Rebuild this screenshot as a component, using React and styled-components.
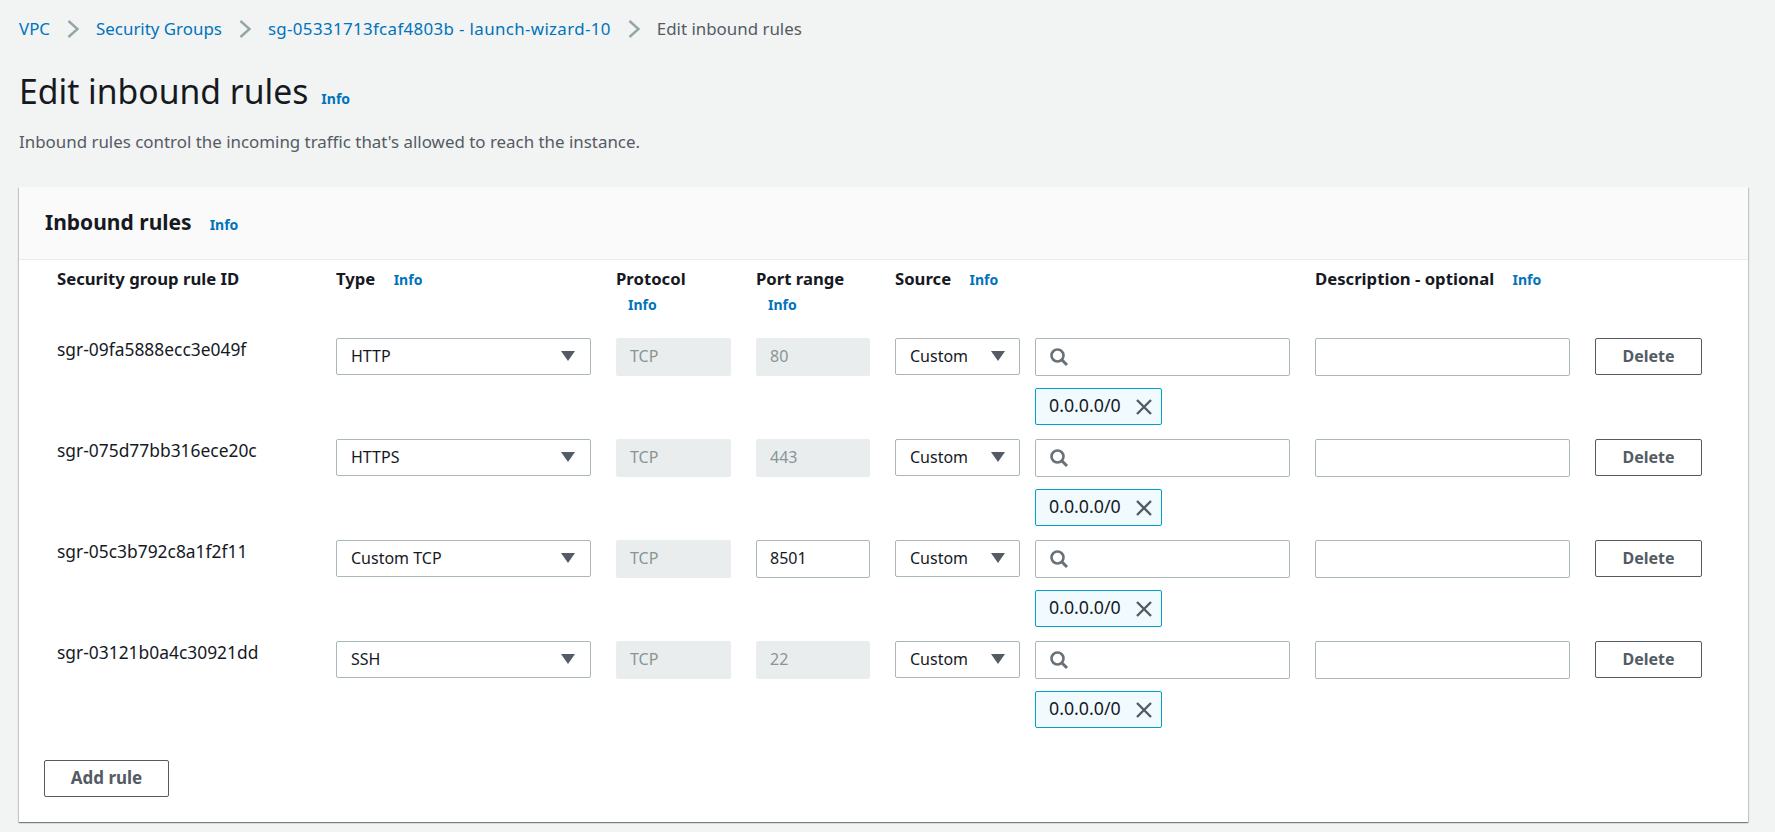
import styled, { createGlobalStyle } from "styled-components";

const RULES = [
  { id: "sgr-09fa5888ecc3e049f", type: "HTTP", port: "80" },
  { id: "sgr-075d77bb316ece20c", type: "HTTPS", port: "443" },
  { id: "sgr-05c3b792c8a1f2f11", type: "Custom TCP", port: "8501", editable: true },
  { id: "sgr-03121b0a4c30921dd", type: "SSH", port: "22" },
];

const CRUMBS = ["VPC", "Security Groups", "sg-05331713fcaf4803b - launch-wizard-10"];

function Caret() {
  return (
    <svg width="14" height="10" viewBox="0 0 14 10">
      <path d="M0 0h14L7 10z" fill="#545b64" />
    </svg>
  );
}

function App() {
  return (
    <Page>
      <GlobalStyle />
      <Breadcrumbs>
        {CRUMBS.map((c) => (
          <Crumb key={c}>
            <CrumbLink>{c}</CrumbLink>
            <svg width="12" height="18" viewBox="0 0 12 18">
              <path d="M1.5 1l9 8-9 8" fill="none" stroke="#95a5a6" strokeWidth="2.4" />
            </svg>
          </Crumb>
        ))}
        <CrumbCurrent>Edit inbound rules</CrumbCurrent>
      </Breadcrumbs>

      <TitleRow>
        <Title>Edit inbound rules</Title>
        <Info>Info</Info>
      </TitleRow>
      <Description>
        Inbound rules control the incoming traffic that's allowed to reach the instance.
      </Description>

      <Card>
        <CardHeader>
          <CardTitle>Inbound rules</CardTitle>
          <Info>Info</Info>
        </CardHeader>
        <CardBody>
          <HeadRow>
            <Label>Security group rule ID</Label>
            <Label>
              Type <Info>Info</Info>
            </Label>
            <div>
              <Label>Protocol</Label>
              <IndentedInfo>Info</IndentedInfo>
            </div>
            <div>
              <Label>Port range</Label>
              <IndentedInfo>Info</IndentedInfo>
            </div>
            <Label>
              Source <Info>Info</Info>
            </Label>
            <Label>
              Description - optional <Info>Info</Info>
            </Label>
          </HeadRow>

          {RULES.map((r) => (
            <RuleRow key={r.id}>
              <RuleId>{r.id}</RuleId>
              <Select>
                {r.type}
                <Caret />
              </Select>
              <Field>TCP</Field>
              <Field $editable={r.editable}>{r.port}</Field>
              <SourceCell>
                <SourceSelect>
                  Custom
                  <Caret />
                </SourceSelect>
                <SearchStack>
                  <TextBox>
                    <svg width="20" height="20" viewBox="0 0 20 20">
                      <circle cx="8.5" cy="8.5" r="6" fill="none" stroke="#687078" strokeWidth="2.6" />
                      <path d="M13 13l5 5" stroke="#687078" strokeWidth="3" />
                    </svg>
                  </TextBox>
                  <Chip>
                    <ChipText>0.0.0.0/0</ChipText>
                    <svg width="18" height="18" viewBox="0 0 18 18">
                      <path d="M2 2l14 14M16 2L2 16" stroke="#545b64" strokeWidth="2.4" />
                    </svg>
                  </Chip>
                </SearchStack>
              </SourceCell>
              <TextBox />
              <Button>Delete</Button>
            </RuleRow>
          ))}
        </CardBody>
        <Footer>
          <AddButton>Add rule</AddButton>
        </Footer>
      </Card>
    </Page>
  );
}

export default App;

const GlobalStyle = createGlobalStyle`
  html, body {
    margin: 0;
    background: #f2f3f3;
    color: #16191f;
    font-family: "Noto Sans", "Open Sans", sans-serif;
    font-size: 16px;
  }
`;

const Page = styled.div`
  height: 832px;
  box-sizing: border-box;
  padding: 18px 27px 10px 19px;
  overflow: hidden;
`;

const Breadcrumbs = styled.nav`
  display: flex;
  align-items: center;
  height: 21px;
  font-size: 16.9px;
`;

const Crumb = styled.div`
  display: flex;
  align-items: center;
  gap: 17px;
  margin-right: 17px;

  &:nth-child(3) {
    letter-spacing: 0.35px;
  }
`;

const CrumbLink = styled.a`
  color: #0073bb;
`;

const CrumbCurrent = styled.span`
  color: #545b64;
`;

const TitleRow = styled.div`
  display: flex;
  align-items: baseline;
  gap: 13px;
  margin-top: 29px;
  height: 46px;
`;

const Title = styled.h1`
  margin: 0;
  font-size: 33.7px;
  font-weight: 400;
  line-height: 46px;
`;

const Info = styled.a`
  color: #0073bb;
  font-size: 14px;
  font-weight: 700;
`;

const IndentedInfo = styled(Info)`
  display: block;
  margin: 5px 0 0 12px;
  line-height: 20px;
`;

const Description = styled.p`
  margin: 17px 0 0;
  color: #545b64;
  font-size: 16.9px;
  line-height: 22px;
`;

const Card = styled.section`
  margin-top: 34px;
  height: 635px;
  box-sizing: border-box;
  background: #fff;
  box-shadow: 0 1px 1px 0 rgba(0, 28, 36, 0.35), 1px 1px 1px 0 rgba(0, 28, 36, 0.15),
    -1px 1px 1px 0 rgba(0, 28, 36, 0.15);
`;

const CardHeader = styled.header`
  display: flex;
  align-items: baseline;
  gap: 18px;
  height: 73px;
  box-sizing: border-box;
  padding: 21px 26px 0;
  background: #fafafa;
  border-bottom: 1px solid #eaeded;
`;

const CardTitle = styled.h2`
  margin: 0;
  font-size: 21px;
  font-weight: 700;
  line-height: 28px;
`;

const CardBody = styled.div`
  padding: 0 0 0 38px;
`;

const RowGrid = styled.div`
  display: grid;
  grid-template-columns: 254px 255px 115px 114px 395px 255px 107px;
  column-gap: 25px;
`;

const HeadRow = styled(RowGrid)`
  height: 78px;
  padding-top: 8px;
  box-sizing: border-box;
`;

const Label = styled.div`
  font-size: 16.7px;
  font-weight: 700;
  line-height: 22px;
  white-space: nowrap;

  ${Info} {
    margin-left: 14px;
  }
`;

const RuleRow = styled(RowGrid)`
  height: 101px;
  align-items: start;
`;

const RuleId = styled.div`
  font-size: 17.4px;
  line-height: 22px;
  white-space: nowrap;
`;

const Select = styled.div`
  display: flex;
  align-items: center;
  justify-content: space-between;
  height: 37px;
  box-sizing: border-box;
  padding: 0 15px 2px 14px;
  background: #fff;
  border: 1px solid #aab7b8;
  border-radius: 2px;
`;

const SourceSelect = styled(Select)`
  width: 125px;
  flex: none;
  padding-right: 14px;
`;

const Field = styled.div`
  display: flex;
  align-items: center;
  height: 38px;
  box-sizing: border-box;
  padding: 0 13px 2px;
  border-radius: 2px;
  border: 1px solid ${(p) => (p.$editable ? "#aab7b8" : "#eaeded")};
  background: ${(p) => (p.$editable ? "#fff" : "#eaeded")};
  color: ${(p) => (p.$editable ? "#16191f" : "#879596")};
`;

const SourceCell = styled.div`
  display: flex;
  gap: 15px;
`;

const SearchStack = styled.div`
  flex: 1;
  display: flex;
  flex-direction: column;
  align-items: flex-start;
  gap: 12px;
`;

const TextBox = styled.div`
  display: flex;
  align-items: center;
  width: 100%;
  height: 38px;
  box-sizing: border-box;
  padding: 0 13px;
  background: #fff;
  border: 1px solid #aab7b8;
  border-radius: 2px;
`;

const Chip = styled.div`
  display: flex;
  align-items: center;
  justify-content: space-between;
  height: 37px;
  width: 127px;
  box-sizing: border-box;
  padding: 0 8px 0 13px;
  background: #f1faff;
  border: 1px solid #00a1c9;
  border-radius: 2px;
`;

const ChipText = styled.span`
  font-size: 17.8px;
  margin-top: -3px;
`;

const Button = styled.button`
  height: 37px;
  padding: 0 0 2px;
  background: #fff;
  border: 1px solid #545b64;
  border-radius: 2px;
  color: #545b64;
  font: 700 16px "Noto Sans", "Open Sans", sans-serif;
`;

const Footer = styled.div`
  padding: 18px 0 0 25px;
`;

const AddButton = styled(Button)`
  width: 125px;
  font-size: 17px;
`;
